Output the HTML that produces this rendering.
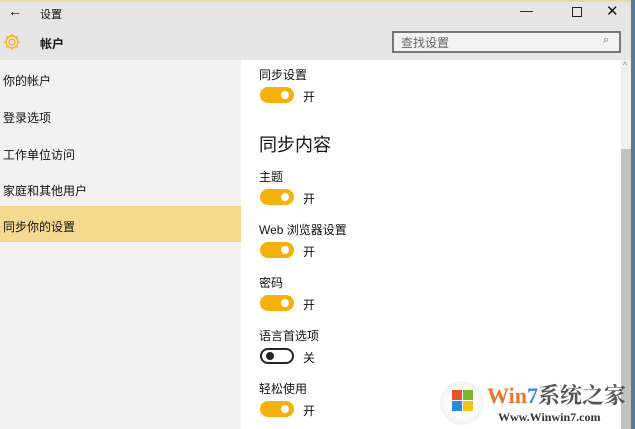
<!DOCTYPE html>
<html><head><meta charset="utf-8"><style>
*{margin:0;padding:0;box-sizing:border-box}
body{width:635px;height:429px;overflow:hidden;position:relative;background:#fff;font-family:"Liberation Sans","Noto Sans CJK SC",sans-serif;color:#111}
.a{position:absolute}
.t{font-size:12px}
.tg{position:absolute;left:260px;width:34px;height:16px;border-radius:8px;background:#f5b10a}
.tg::after{content:"";position:absolute;right:5px;top:4px;width:8px;height:8px;border-radius:50%;background:#fff}
.off{background:#fff;border:2px solid #222}
.off::after{left:4px;right:auto;top:2px;background:#222}
.lb{position:absolute;left:303px;font-size:12px}
</style></head><body>
<div class="a" style="left:0;top:0;width:635px;height:2px;background:#e9d9a8"></div>
<div class="a" style="left:0;top:2px;width:631px;height:58px;background:#e6e6e6"></div>
<div class="a t" style="left:8px;top:3px;font-size:14px">←</div>
<div class="a" style="left:40px;top:6px;font-size:11px">设置</div>
<div class="a" style="left:520px;top:3px;font-size:13px">—</div>
<div class="a" style="left:572px;top:7px;width:10px;height:10px;border:1.5px solid #222"></div>
<div class="a" style="left:606px;top:2px;font-size:15px">✕</div>
<svg class="a" style="left:2px;top:32px" width="20" height="20" viewBox="0 0 20 20"><g fill="none" stroke="#f0b830" stroke-width="1.5"><circle cx="10" cy="10" r="3"/><path d="M10 2v3M10 15v3M2 10h3M15 10h3M4.3 4.3l2.1 2.1M13.6 13.6l2.1 2.1M4.3 15.7l2.1-2.1M13.6 6.4l2.1-2.1"/><circle cx="10" cy="10" r="6"/></g></svg>
<div class="a" style="left:40px;top:35px;font-size:12px;font-weight:bold">帐户</div>
<div class="a" style="left:392px;top:31px;width:229px;height:22px;border:2px solid #777;background:#f3f3f3"></div>
<div class="a" style="left:401px;top:34px;font-size:12px;color:#666">查找设置</div>
<div class="a" style="left:603px;top:34px;font-size:11px;color:#777">⌕</div>
<div class="a" style="left:0;top:60px;width:241px;height:369px;background:#f2f2f2"></div>
<div class="a" style="left:0;top:206px;width:241px;height:36px;background:#f5d98f"></div>
<div class="a t" style="left:3px;top:72px">你的帐户</div>
<div class="a t" style="left:3px;top:109px">登录选项</div>
<div class="a t" style="left:3px;top:146px">工作单位访问</div>
<div class="a t" style="left:3px;top:182px">家庭和其他用户</div>
<div class="a t" style="left:3px;top:218px">同步你的设置</div>
<div class="a" style="left:621px;top:60px;width:10px;height:369px;background:#f0f0f0"></div>
<div class="a" style="left:621px;top:149px;width:10px;height:280px;background:#c2c2c2"></div>
<div class="a" style="left:623px;top:60px;font-size:9px;color:#888">^</div>
<div class="a" style="left:631px;top:0;width:4px;height:429px;background:#5b7896"></div>
<div class="a t" style="left:259px;top:66px">同步设置</div>
<div class="tg" style="top:87px"></div><div class="lb" style="top:88px">开</div>
<div class="a" style="left:259px;top:131px;font-size:18px">同步内容</div>
<div class="a t" style="left:259px;top:168px">主题</div>
<div class="tg" style="top:189px"></div><div class="lb" style="top:190px">开</div>
<div class="a t" style="left:259px;top:221px">Web 浏览器设置</div>
<div class="tg" style="top:242px"></div><div class="lb" style="top:243px">开</div>
<div class="a t" style="left:259px;top:274px">密码</div>
<div class="tg" style="top:295px"></div><div class="lb" style="top:296px">开</div>
<div class="a t" style="left:259px;top:327px">语言首选项</div>
<div class="tg off" style="top:348px"></div><div class="lb" style="top:349px">关</div>
<div class="a t" style="left:259px;top:380px">轻松使用</div>
<div class="tg" style="top:401px"></div><div class="lb" style="top:402px">开</div>
<div class="a" style="left:440px;top:381px;width:44px;height:44px;border-radius:50%;background:radial-gradient(circle,#fff 40%,#dfe6ee)"></div>
<div class="a" style="left:452px;top:390px;width:10px;height:10px;background:#e8542a"></div>
<div class="a" style="left:463px;top:390px;width:10px;height:10px;background:#78b82a"></div>
<div class="a" style="left:452px;top:401px;width:10px;height:10px;background:#2a8ae0"></div>
<div class="a" style="left:463px;top:401px;width:10px;height:10px;background:#f5c018"></div>
<div class="a" style="left:487px;top:379px;font-size:22px;font-weight:bold;font-family:'Liberation Serif','Noto Serif CJK SC',serif;color:#e8772a;white-space:nowrap">Win<span style="color:#3a8ad8">7</span><span style="color:#555">系统之家</span></div>
<div class="a" style="left:498px;top:410px;font-size:12px;font-weight:bold;font-family:'Liberation Serif',serif;color:#333">Www.Winwin7.com</div>
</body></html>
